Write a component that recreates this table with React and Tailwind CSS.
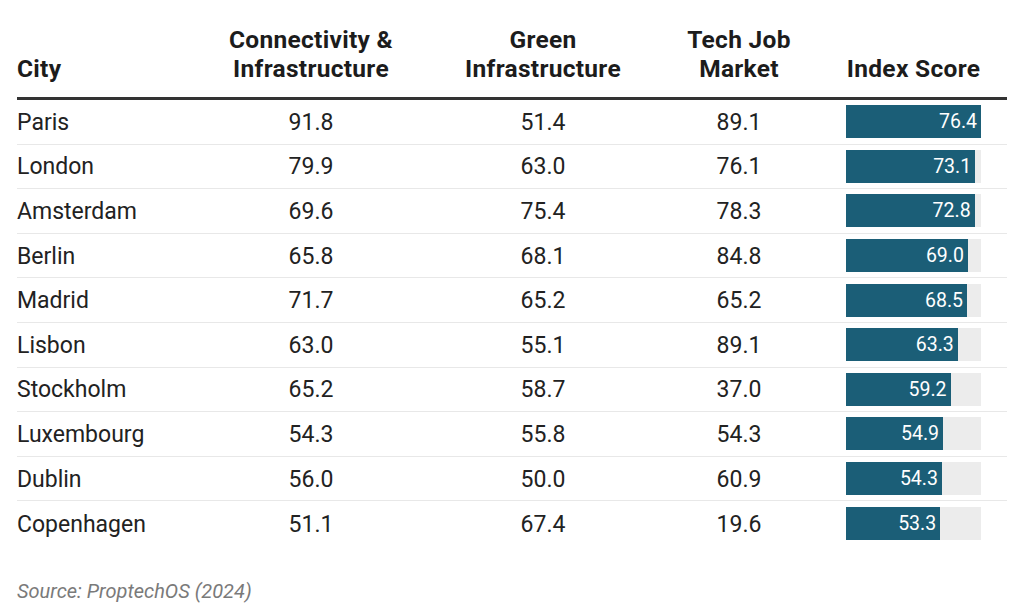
import React from "react";

const rows = [
  ["Paris", "91.8", "51.4", "89.1", 76.4],
  ["London", "79.9", "63.0", "76.1", 73.1],
  ["Amsterdam", "69.6", "75.4", "78.3", 72.8],
  ["Berlin", "65.8", "68.1", "84.8", 69.0],
  ["Madrid", "71.7", "65.2", "65.2", 68.5],
  ["Lisbon", "63.0", "55.1", "89.1", 63.3],
  ["Stockholm", "65.2", "58.7", "37.0", 59.2],
  ["Luxembourg", "54.3", "55.8", "54.3", 54.9],
  ["Dublin", "56.0", "50.0", "60.9", 54.3],
  ["Copenhagen", "51.1", "67.4", "19.6", 53.3],
];

export default function App() {
  return (
    <div
      className="w-[1024px] h-[603px] bg-white overflow-hidden pt-[25px] pl-[17px]"
      style={{ fontFamily: "Roboto, 'Liberation Sans', sans-serif" }}
    >
      <div className="w-[990px]">
        <div className="grid grid-cols-[194px_200px_264px_128px_204px] items-end border-b-[3px] border-[#333333] pb-[14px] text-[24.5px] leading-[29px] font-bold tracking-[0.3px] text-[#1c1c1c]">
          <div>City</div>
          <div className="text-center whitespace-nowrap">Connectivity &amp;<br />Infrastructure</div>
          <div className="text-center">Green<br />Infrastructure</div>
          <div className="text-center">Tech Job<br />Market</div>
          <div className="pl-[43px]">
            <div className="w-[135px] text-center whitespace-nowrap">Index Score</div>
          </div>
        </div>
        {rows.map((r, i) => (
          <div
            key={r[0]}
            className={
              "grid grid-cols-[194px_200px_264px_128px_204px] items-center h-[44.6px] text-[23px] text-[#222222] " +
              (i < rows.length - 1 ? "border-b border-[#e8e8e8]" : "")
            }
          >
            <div className="leading-[26px] pt-[2px]">{r[0]}</div>
            <div className="text-center leading-[26px] pt-[2px]">{r[1]}</div>
            <div className="text-center leading-[26px] pt-[2px]">{r[2]}</div>
            <div className="text-center leading-[26px] pt-[2px]">{r[3]}</div>
            <div className="pl-[43px]">
              <div className="w-[135px] h-[33px] bg-[#ececec]">
                <div
                  className="h-full bg-[#1b5e77] text-white text-[19.5px] leading-[33px] text-right pr-[4px]"
                  style={{ width: `${(r[4] / 76.4) * 135}px` }}
                >
                  {r[4].toFixed(1)}
                </div>
              </div>
            </div>
          </div>
        ))}
        <div className="mt-[30px] text-[20px] italic text-[#7a7a7a]">Source: ProptechOS (2024)</div>
      </div>
    </div>
  );
}
